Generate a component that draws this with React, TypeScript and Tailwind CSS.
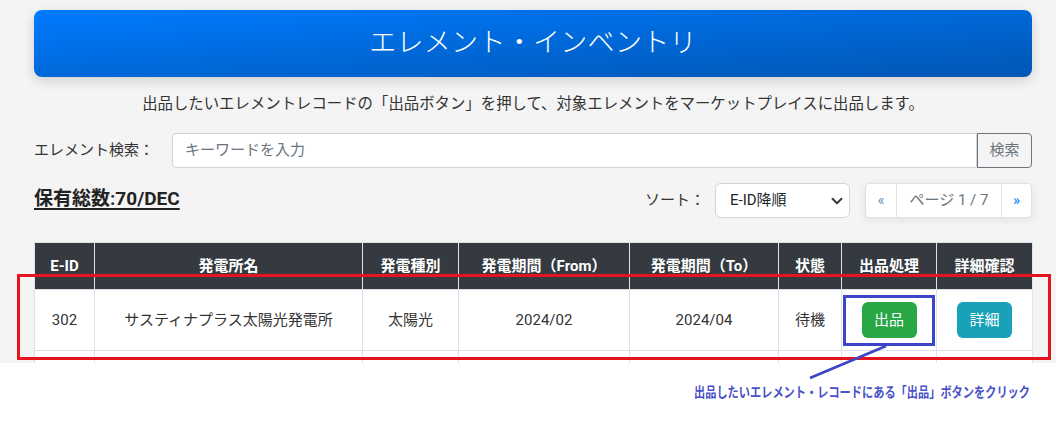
import React from "react";

const F = { fontFamily: 'Roboto, "Noto Sans CJK JP", sans-serif' };

const cols = [
  { label: "E-ID", w: "w-[60px]" },
  { label: "発電所名", w: "w-[268px]" },
  { label: "発電種別", w: "w-[96px]" },
  { label: "発電期間（From）", w: "w-[171px]" },
  { label: "発電期間（To）", w: "w-[149px]" },
  { label: "状態", w: "w-[63px]" },
  { label: "出品処理", w: "w-[95px]" },
  { label: "詳細確認", w: "w-[96px]" },
];

export default function App() {
  return (
    <div className="relative w-[1056px] h-[425px] bg-white overflow-hidden text-[#333]" style={F}>
      <div className="h-[363px] overflow-hidden bg-[#f4f4f4]">
        <div className="ml-[34px] w-[998px] pt-[10px]">
          <div className="h-[67px] rounded-lg bg-gradient-to-br from-[#007bff] to-[#0056b3] shadow-[0_4px_12px_rgba(0,0,0,0.15)] flex items-center justify-center">
            <h1 className="text-white text-[27px] font-light leading-none tracking-[0.3px]">エレメント・インベントリ</h1>
          </div>
          <p className="mt-[16px] text-center text-[15.4px] leading-[22px] text-[#333]">
            出品したいエレメントレコードの「出品ボタン」を押して、対象エレメントをマーケットプレイスに出品します。
          </p>
          <div className="mt-[18px] flex items-center h-[35px]">
            <label className="text-[15px] w-[138px] shrink-0">エレメント検索：</label>
            <div className="flex-1 h-[35px] bg-white border border-[#ced4da] rounded-l flex items-center px-[12px] text-[15px] text-[#6c757d]">
              キーワードを入力
            </div>
            <div className="w-[55px] h-[35px] border border-[#6c757d] rounded-r flex items-center justify-center text-[15px] text-[#6c757d]">
              検索
            </div>
          </div>
          <div className="mt-[15px] flex items-center h-[35px]">
            <div className="flex-1 text-[19px] font-bold underline underline-offset-[3px] decoration-[1.5px] text-[#222] pb-[2px]">
              保有総数:70/DEC
            </div>
            <span className="text-[15px] mr-[10px]">ソート：</span>
            <div className="w-[135px] h-[35px] bg-white border border-[#ced4da] rounded-md flex items-center justify-between pl-[14px] pr-[6px] text-[15px] text-[#212529]">
              <span>E-ID降順</span>
              <svg width="12" height="12" viewBox="0 0 16 16">
                <path d="M2 5l6 6 6-6" fill="none" stroke="#343a40" strokeWidth="2.6" strokeLinecap="round" strokeLinejoin="round" />
              </svg>
            </div>
            <div className="ml-[15px] h-[35px] flex bg-white border border-[#dee2e6] rounded shadow-[0_2px_8px_rgba(0,0,0,0.08)] text-[15px]">
              <div className="w-[31px] flex items-center justify-center text-[#6c8fb5] border-r border-[#dee2e6]">«</div>
              <div className="w-[105px] flex items-center justify-center text-[#6c757d] border-r border-[#dee2e6]">ページ 1 / 7</div>
              <div className="w-[29px] flex items-center justify-center text-[#007bff]">»</div>
            </div>
          </div>
          <table className="mt-[24px] w-[998px] border-collapse table-fixed text-[15px]">
            <thead>
              <tr className="h-[47px] bg-[#343a40] text-white">
                {cols.map((c) => (
                  <th key={c.label} className={`${c.w} border border-[#dee2e6] font-bold text-center align-middle p-0`}>
                    {c.label}
                  </th>
                ))}
              </tr>
            </thead>
            <tbody className="bg-white">
              <tr className="h-[61px]">
                <td className="border border-[#dee2e6] text-center">302</td>
                <td className="border border-[#dee2e6] text-center">サスティナプラス太陽光発電所</td>
                <td className="border border-[#dee2e6] text-center">太陽光</td>
                <td className="border border-[#dee2e6] text-center">2024/02</td>
                <td className="border border-[#dee2e6] text-center">2024/04</td>
                <td className="border border-[#dee2e6] text-center">待機</td>
                <td className="border border-[#dee2e6] text-center">
                  <button className="w-[55px] h-[36px] rounded-md bg-[#28a745] text-white text-[15px] inline-flex items-center justify-center">出品</button>
                </td>
                <td className="border border-[#dee2e6] text-center">
                  <button className="w-[55px] h-[36px] rounded-md bg-[#17a2b8] text-white text-[15px] inline-flex items-center justify-center">詳細</button>
                </td>
              </tr>
              <tr className="h-[40px]">
                {cols.map((c) => (
                  <td key={c.label} className="border border-[#dee2e6]"></td>
                ))}
              </tr>
            </tbody>
          </table>
        </div>
      </div>

      {/* annotations */}
      <div className="absolute left-[17px] top-[274px] w-[1034px] h-[86px] border-[3px] border-[#e6141e]"></div>
      <div className="absolute left-[843px] top-[295px] w-[92px] h-[51px] border-[3px] border-[#3c45c8]"></div>
      <svg className="absolute left-0 top-0" width="1056" height="425">
        <line x1="886" y1="346" x2="810" y2="378" stroke="#3c45c8" strokeWidth="2.6" />
      </svg>
      <div className="absolute left-[694px] top-[380px] whitespace-nowrap">
        <span className="inline-block origin-left scale-x-[0.8] text-[14px] font-bold leading-[20px] text-[#4a52c8]">
          出品したいエレメント・レコードにある「出品」ボタンをクリック
        </span>
      </div>
    </div>
  );
}
